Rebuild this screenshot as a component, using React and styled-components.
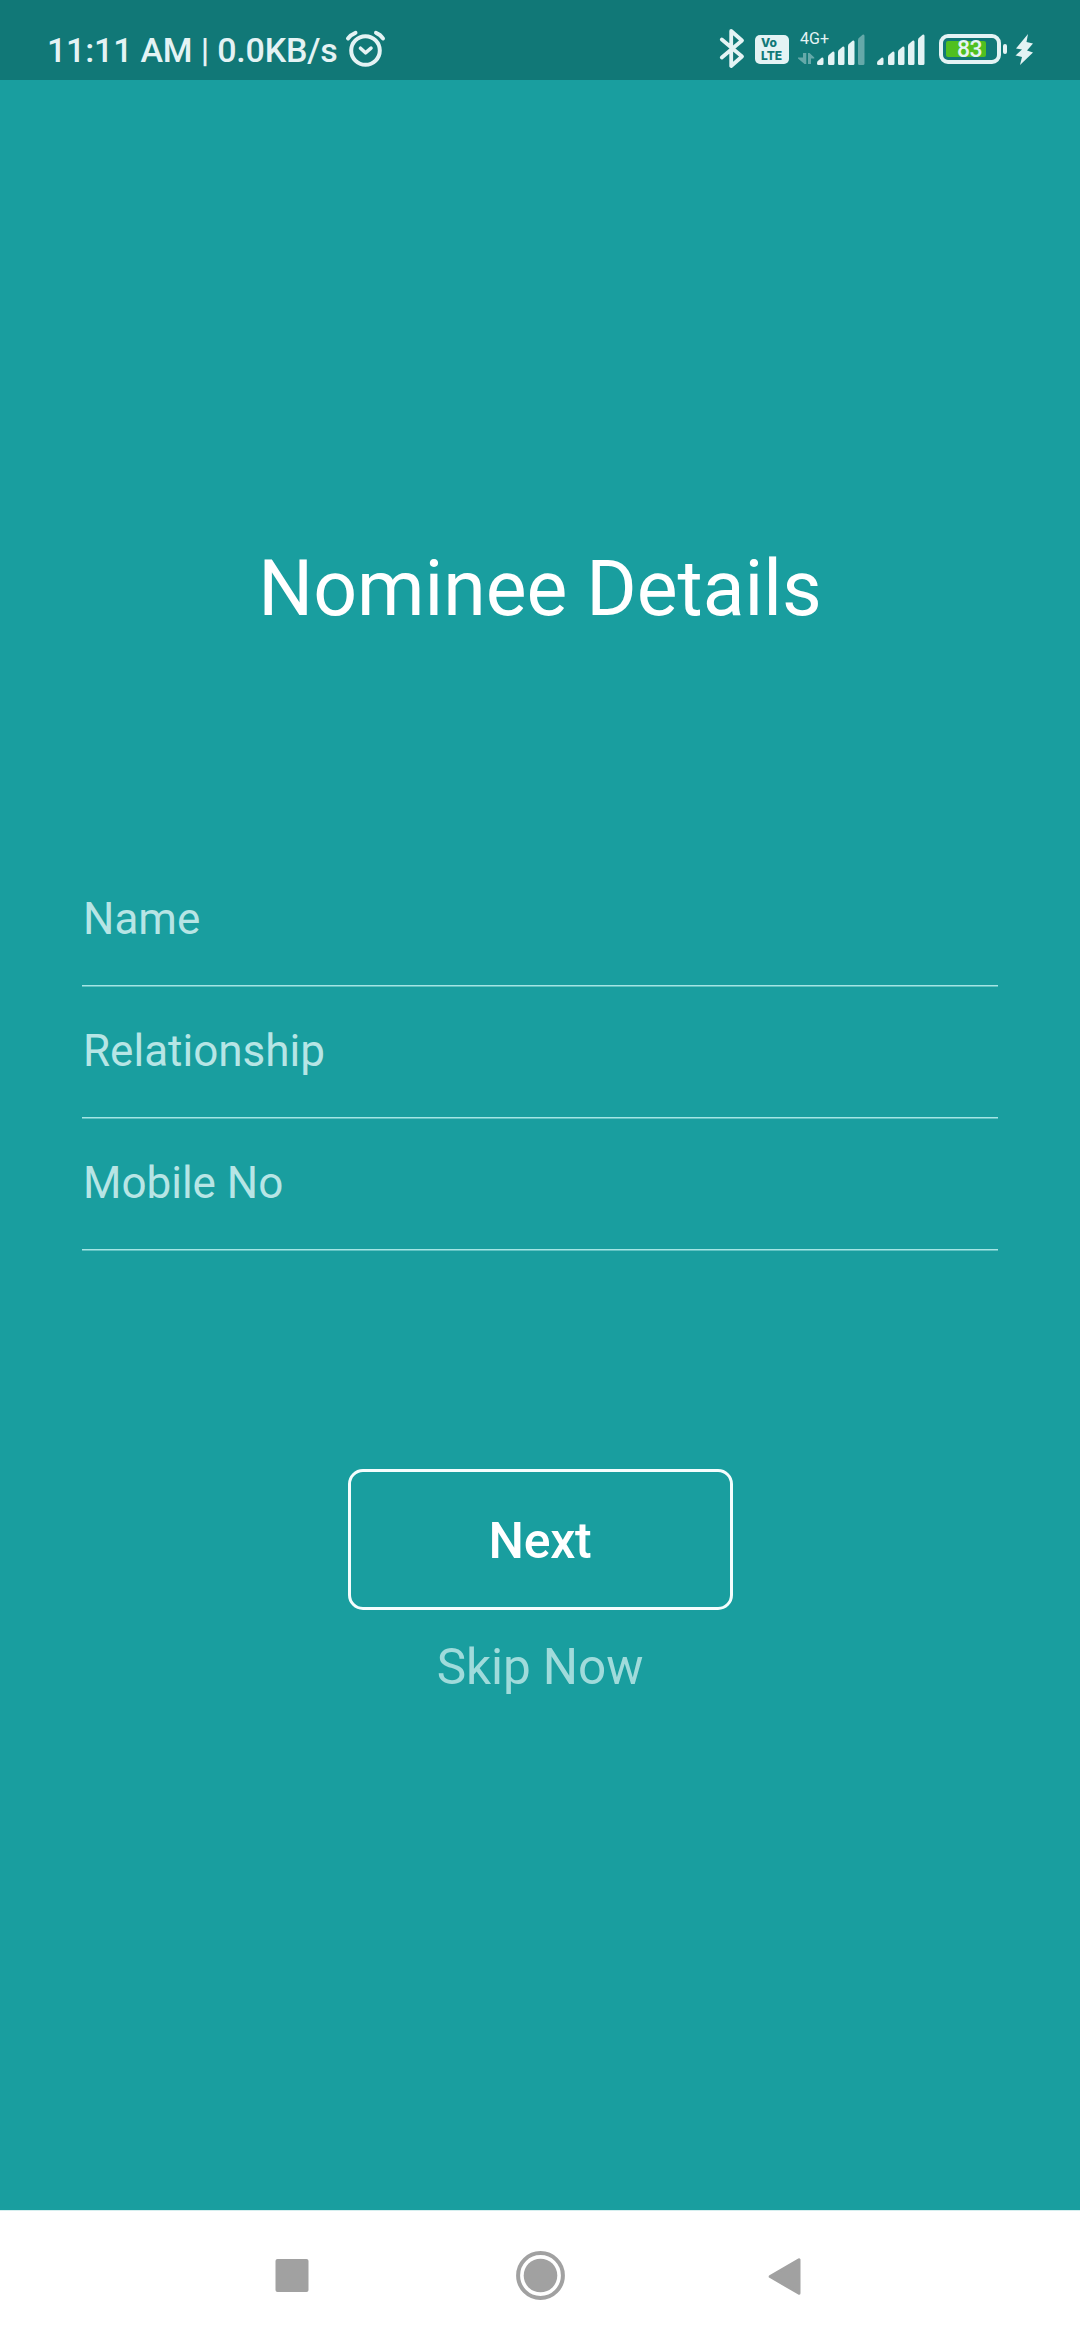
import React from "react";
import styled, { createGlobalStyle } from "styled-components";

const GlobalStyle = createGlobalStyle`
  html, body { margin: 0; padding: 0; background: #199e9f; }
  * { box-sizing: border-box; }
`;

const ink = "#e4f3f4";

const Screen = styled.div`
  display: flex;
  flex-direction: column;
  width: 1080px;
  height: 2340px;
  overflow: hidden;
  background: #199e9f;
  font-family: Roboto, "Noto Sans", sans-serif;
`;

const StatusBar = styled.header`
  display: flex;
  align-items: flex-start;
  justify-content: space-between;
  flex: none;
  height: 80px;
  padding: 28px 46px 0 47px;
  background: #117877;
  color: ${ink};
`;

const StatusGroup = styled.div`
  display: flex;
  align-items: flex-start;
  height: 44px;
`;

const Clock = styled.span`
  width: 298px;
  font-size: 34px;
  font-weight: 500;
  letter-spacing: -0.2px;
  line-height: 44px;
  white-space: nowrap;
`;

const Glyph = styled.svg`
  display: block;
  flex: none;
  margin-left: ${(p) => p.$gap || 0}px;
`;

const VolteBadge = styled.div`
  display: flex;
  flex-direction: column;
  width: 34px;
  height: 29px;
  margin: 7px 0 0 10px;
  padding: 2px 0 0 6px;
  border-radius: 5px;
  background: ${ink};
  color: #117877;
  font-family: Inter, Roboto, sans-serif;
  font-size: 12px;
  font-weight: 800;
  line-height: 12.5px;
`;

const MobileData = styled.div`
  display: flex;
  flex-direction: column;
  gap: 2px;
  width: 20px;
  margin-left: 8px;
`;

const NetworkType = styled.span`
  padding-left: 3px;
  font-size: 16px;
  line-height: 18px;
  margin-top: 2px;
  white-space: nowrap;
`;

const Battery = styled.div`
  display: flex;
  align-items: center;
  height: 30px;
  margin: 6px 0 0 14px;
`;

const BatteryShell = styled.div`
  width: 62px;
  height: 30px;
  padding: 3px;
  border: 4px solid ${ink};
  border-radius: 9px;
`;

const BatteryLevel = styled.div`
  width: 40px;
  height: 16px;
  padding-left: 11px;
  border-radius: 2px;
  background: #50c020;
  font-size: 23px;
  font-weight: 500;
  letter-spacing: -0.5px;
  line-height: 18px;
`;

const BatteryTip = styled.div`
  width: 4px;
  height: 10px;
  margin-left: 2px;
  border-radius: 2px;
  background: ${ink};
`;

const Content = styled.main`
  display: flex;
  flex-direction: column;
  align-items: center;
  flex: 1;
  padding: 463px 82px 0;
`;

const Title = styled.h1`
  margin: 0;
  color: #fff;
  font-size: 77px;
  font-weight: 400;
  letter-spacing: -0.05px;
  line-height: 92px;
  white-space: nowrap;
`;

const Form = styled.div`
  width: 100%;
  margin-top: 220px;
`;

const Field = styled.div`
  height: 132px;
  padding: 38px 0 0 1px;
  border-bottom: 1px solid #5fc2c2;
  box-shadow: inset 0 -1px 0 #a5e5e4;
  color: #b7e5e5;
  font-size: 44px;
  line-height: 52px;
`;

const NextButton = styled.button`
  width: 385px;
  height: 141px;
  margin: 218px 0 0;
  padding: 3px 0 0;
  border: 3px solid #f4fdfd;
  border-radius: 15px;
  background: transparent;
  color: #fff;
  font: 500 50px/60px Roboto, sans-serif;
  letter-spacing: -0.3px;
`;

const SkipLink = styled.span`
  margin-top: 27px;
  color: #a0dbdb;
  font-size: 49.5px;
  letter-spacing: -0.1px;
  line-height: 60px;
`;

const NavBar = styled.nav`
  display: flex;
  align-items: center;
  justify-content: space-between;
  flex: none;
  height: 130px;
  padding: 0 267px;
  border-top: 1px solid #d6efef;
  background: #fff;
`;

const FIELDS = ["Name", "Relationship", "Mobile No"];

const BARS = [
  [0, 23],
  [11, 17],
  [21, 12],
  [31, 6],
  [41, 0],
];

function Signal({ gap, weak }) {
  return (
    <Glyph $gap={gap} width="48" height="44" viewBox="0 -6 48 44" fill={ink}>
      {BARS.map(([x, y], i) => (
        <path
          key={x}
          opacity={weak && i === 4 ? 0.4 : 1}
          d={`M${x} ${y + 6}Q${x} ${y + 4} ${x + 2} ${y + 3}L${x + 4.5} ${y + 0.8}Q${x + 6.5} ${y - 0.4} ${x + 6.5} ${y + 2}V29.5Q${x + 6.5} 31 ${x + 5} 31H${x + 1.5}Q${x} 31 ${x} 29.5Z`}
        />
      ))}
    </Glyph>
  );
}

export default function App() {
  return (
    <Screen>
      <GlobalStyle />
      <StatusBar>
        <StatusGroup>
          <Clock>11:11 AM | 0.0KB/s</Clock>
          <Glyph width="42" height="44" viewBox="345 28 42 44" fill="none" stroke={ink} strokeLinecap="round" strokeLinejoin="round">
            <circle cx="365.5" cy="50.5" r="14.3" strokeWidth="4" />
            <path strokeWidth="3.6" d="M360.5 48.2 365.5 52.8 371 48.2" />
            <path strokeWidth="4" d="M348 38.5Q351 34.5 355.5 32.8M376 32.8Q380.5 34.5 383 38.5" />
          </Glyph>
        </StatusGroup>
        <StatusGroup>
          <Glyph width="26" height="44" viewBox="719 28 26 44" fill="none" stroke={ink} strokeWidth="3.8" strokeLinecap="round" strokeLinejoin="round">
            <path d="M721.8 39.5 742 56.5 731.2 66V31L742 40.5 721.8 57.5" />
          </Glyph>
          <VolteBadge>
            <span>Vo</span>
            <span>LTE</span>
          </VolteBadge>
          <MobileData>
            <NetworkType>4G+</NetworkType>
            <Glyph width="18" height="16" viewBox="797 50 18 16" fill={ink} opacity="0.4">
              <path d="M803 53H806.3V64H804.5L798 58.5V57.5H803ZM808 64V53H809.5L814.3 57.5V58.5H811V64Z" />
            </Glyph>
          </MobileData>
          <Signal weak />
          <Signal gap={12} />
          <Battery>
            <BatteryShell>
              <BatteryLevel>83</BatteryLevel>
            </BatteryShell>
            <BatteryTip />
          </Battery>
          <Glyph $gap={7} width="20" height="44" viewBox="1014 28 20 44" fill={ink}>
            <path d="M1028 34 1016 48.5 1022 49.5 1015.5 55.5 1022 57 1020 65 1033 52.5 1027 50.5 1033 43.5 1026.5 42Z" />
          </Glyph>
        </StatusGroup>
      </StatusBar>
      <Content>
        <Title>Nominee Details</Title>
        <Form>
          {FIELDS.map((label) => (
            <Field key={label}>{label}</Field>
          ))}
        </Form>
        <NextButton type="button">Next</NextButton>
        <SkipLink>Skip Now</SkipLink>
      </Content>
      <NavBar>
        <Glyph width="50" height="50" viewBox="267 2250 50 50" fill="#a1a1a1">
          <rect x="275.5" y="2258" width="33" height="33" rx="2" />
        </Glyph>
        <Glyph width="50" height="50" viewBox="-25.5 -24.5 50 50">
          <circle r="22.4" fill="none" stroke="#a1a1a1" strokeWidth="4" />
          <circle r="16.8" fill="#a1a1a1" />
        </Glyph>
        <Glyph width="50" height="50" viewBox="763 2250 50 50" fill="#a1a1a1" stroke="#a1a1a1" strokeWidth="3" strokeLinejoin="round">
          <path d="M770.2 2275.5 799 2258.7V2292.3Z" />
        </Glyph>
      </NavBar>
    </Screen>
  );
}
